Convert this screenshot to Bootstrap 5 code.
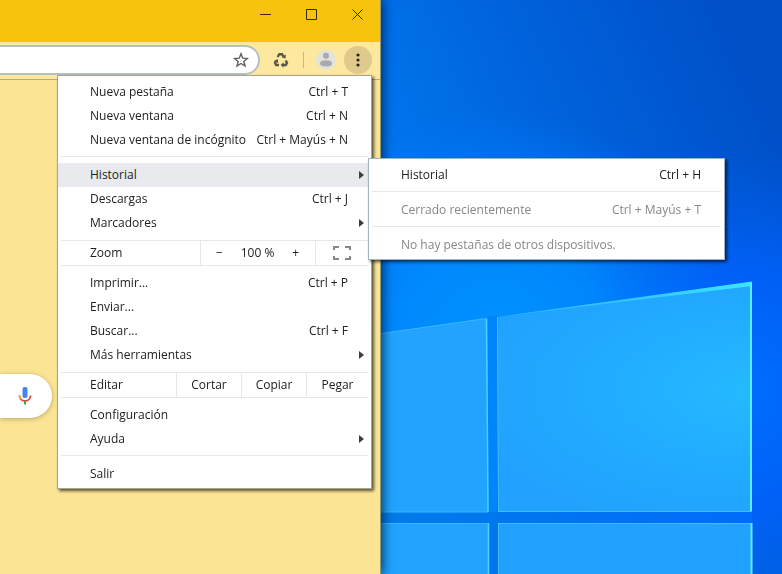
<!DOCTYPE html>
<html lang="es">
<head>
<meta charset="utf-8">
<meta name="viewport" content="width=device-width, initial-scale=1">
<title>Nueva pestaña</title>
<link href="https://cdn.jsdelivr.net/npm/bootstrap@5.3.0/dist/css/bootstrap.min.css" rel="stylesheet">
<style>
  body { font: 12px/24px "Open Sans", "Noto Sans", sans-serif; color: #202124; background: #0068e0; }
  button { font: inherit; color: inherit; background: none; border: 0; padding: 0; }
  .wallpaper { z-index: -1; }

  .browser { width: 381px; background: #fbe595; border-right: 1px solid #8c9a78; box-shadow: 2px 0 10px rgba(0, 20, 50, .75); }
  .title-bar { height: 42px; background: #f7c30d; }
  .win-btn { width: 46px; height: 28px; }
  .tool-bar { height: 38px; background: #fde8a0; border-bottom: 1px solid #cfa565; padding: 3px 8px 4px 0; }
  .omnibox { height: 30px; background: #fff; border: 2px solid #b3c1c0; border-left: 0; border-radius: 0 15px 15px 0; padding-right: 9px; }
  .omnibox input { outline: 0; min-width: 0; }
  .tool-sep { width: 1px; height: 16px; background: #d2b76d; margin: 0 8px 0 13px; }
  .round-btn { width: 28px; height: 28px; border-radius: 50%; }
  .menu-btn { background: #dfca8b; margin-left: 4px; }
  .recycle-btn { width: 18px; margin-left: 12px; }

  .search-pill { width: 52px; height: 44px; margin-top: 294px; background: #fff; border-radius: 0 22px 22px 0; box-shadow: 0 1px 5px rgba(60, 50, 10, .35); padding-right: 18px; }

  .popup { background: #fff; border: 1px solid #a9a58f; padding: 4px 0 2px; box-shadow: 2px 2px 3px rgba(0, 0, 0, .65); z-index: 10; }
  .main-menu { width: 315px; top: 33px; right: 8px; }
  .sub-menu { width: 357px; top: -5px; left: calc(100% - 3px); border-color: #9fb4c4; }
  .entry { height: 24px; padding: 0 23px 0 32px; }
  .entry:hover:enabled, .entry.open { background: #e8eaed; }
  .entry:disabled { color: #85878a; }
  .entry.parent { padding-right: 7px; }
  .entry.parent::after { content: ""; border: 4px solid transparent; border-left: 5px solid #3c4043; border-right: 0; }
  .divide { height: 1px; background: #e6e7e8; margin: 4px 3px 6px; }
  .strip { height: 26px; margin: 5px 3px 5px; border: solid #e6e7e8; border-width: 1px 0; padding-left: 29px; }
  .cell { border-left: 1px solid #e6e7e8; }
  .edit-cell { width: 65px; }
  .edit-cell:last-child { width: 62px; }
  .zoom-cell { width: 115px; padding: 0 16px 0 15px; }
  .full-cell { width: 53px; }
</style>
<script src="https://cdn.jsdelivr.net/npm/bootstrap@5.3.0/dist/js/bootstrap.bundle.min.js"></script>
</head>
<body class="min-vh-100 overflow-hidden">

<svg class="wallpaper position-fixed top-0 start-0 w-100 h-100" viewBox="0 0 782 574" preserveAspectRatio="xMinYMin slice" aria-hidden="true">
  <defs>
    <linearGradient id="sky" x1="381" y1="200" x2="740" y2="40" gradientUnits="userSpaceOnUse">
      <stop offset="0" stop-color="#0078f0"/><stop offset=".5" stop-color="#0062dc"/><stop offset="1" stop-color="#0050c8"/>
    </linearGradient>
    <radialGradient id="glow" cx="500" cy="340" r="230" gradientUnits="userSpaceOnUse">
      <stop offset="0" stop-color="#0092ff"/><stop offset=".45" stop-color="#008cff" stop-opacity=".85"/><stop offset="1" stop-color="#0078ff" stop-opacity="0"/>
    </radialGradient>
    <radialGradient id="halo" cx="740" cy="390" r="240" gradientUnits="userSpaceOnUse">
      <stop offset="0" stop-color="#006eff"/><stop offset=".5" stop-color="#0062ff" stop-opacity=".8"/><stop offset="1" stop-color="#005cf0" stop-opacity="0"/>
    </radialGradient>
    <radialGradient id="pane" cx="752" cy="390" r="300" gradientTransform="translate(0 195) scale(1 .5)" gradientUnits="userSpaceOnUse">
      <stop offset="0" stop-color="#24baff"/><stop offset=".5" stop-color="#22acff"/><stop offset="1" stop-color="#21a1ff"/>
    </radialGradient>
    <linearGradient id="rim" x1="497" y1="0" x2="752" y2="0" gradientUnits="userSpaceOnUse">
      <stop offset="0" stop-color="#38b8ff"/><stop offset=".5" stop-color="#2fc4ff"/><stop offset="1" stop-color="#3ce6ff"/>
    </linearGradient>
    <linearGradient id="gap" x1="381" y1="0" x2="752" y2="0" gradientUnits="userSpaceOnUse">
      <stop offset="0" stop-color="#007ce8"/><stop offset="1" stop-color="#006cfa"/>
    </linearGradient>
  </defs>
  <rect width="782" height="574" fill="url(#sky)"/>
  <rect width="782" height="574" fill="url(#halo)"/>
  <rect width="782" height="574" fill="url(#glow)"/>
  <path d="M300 345 752 283V574H300z" fill="url(#gap)"/>
  <path d="M487 317 497 315V512H487z" fill="#0086fc"/>
  <path d="M300 345 487 318 488.500 512H300zM300 523H489V574H300z" fill="#21a3ff"/>
  <path d="M497 317 752 282V512H498zM498 523H752V574H498z" fill="url(#pane)"/>
  <path d="M300 345 487 318.500M300 512H488M300 523.500H489" fill="none" stroke="#3cb4ff"/>
  <path d="M486.500 319 488 512M488.500 523V574" fill="none" stroke="#4cd0ff" stroke-width="1.500"/>
  <path d="M497.500 317 498.500 512M498.500 523V574M498 511.500H752M498 523.500H752" fill="none" stroke="#44b9ff"/>
  <path d="M497 317 752 281.500V286z" fill="url(#rim)"/>
  <path d="M751 283V511M751.500 523V574" fill="none" stroke="#58f0ff" stroke-width="2"/>
</svg>

<main class="browser min-vh-100 position-relative">
  <header class="title-bar d-flex justify-content-end align-items-start">
    <button class="win-btn d-flex align-items-center justify-content-center" aria-label="Minimizar"><svg width="11" height="11"><path d="M0 5.500H11" stroke="#3a2712"/></svg></button>
    <button class="win-btn d-flex align-items-center justify-content-center" aria-label="Maximizar"><svg width="11" height="11"><path d="M.5.500H10.500V10.500H.5z" fill="none" stroke="#3a2712"/></svg></button>
    <button class="win-btn d-flex align-items-center justify-content-center" aria-label="Cerrar"><svg width="11" height="11"><path d="M.5.500 10.500 10.500M10.500.500.500 10.500" stroke="#3a2712"/></svg></button>
  </header>

  <div class="tool-bar d-flex align-items-center position-relative">
    <div class="omnibox d-flex align-items-center flex-grow-1">
      <input class="flex-grow-1 border-0 bg-transparent" type="text" aria-label="Dirección">
      <button class="d-flex" aria-label="Añadir a marcadores"><svg width="16" height="16" viewBox="0 0 16 16"><path d="M8 1.800 9.700 6.200 14.400 6.500 10.800 9.500 12 14 8 11.500 4 14 5.200 9.500 1.600 6.500 6.300 6.200z" fill="none" stroke="#5a5e62" stroke-width="1.400"/></svg></button>
    </div>
    <button class="recycle-btn d-flex justify-content-center" aria-label="Reciclar">
      <svg width="16" height="16" viewBox="0 0 16 16" fill="none" stroke="#5c5846" stroke-width="2.400">
        <path d="M4.600 5 6.300 2.200H9L10.500 4.500M12.700 8.500 14 10.800 12.800 13H10M6 13H3.200L2 10.800 3 9"/>
        <path d="M8.500 5.300 12.600 6.400 12.800 2.600zM10.500 10.300V15.700L7.600 13zM.9 9 4.800 7 5.200 11z" fill="#5c5846" stroke="none"/>
      </svg>
    </button>
    <span class="tool-sep"></span>
    <button class="round-btn d-flex align-items-center justify-content-center" aria-label="Perfil">
      <svg width="20" height="20" viewBox="0 0 20 20"><circle cx="10" cy="10" r="10" fill="#e4e2dc"/><circle cx="10" cy="5.800" r="3" fill="#a7a9ad"/><path d="M4 13.500Q4 10.300 10 10.300T16 13.500 10 16.500 4 13.500z" fill="#a7a9ad"/></svg>
    </button>
    <button class="round-btn menu-btn d-flex align-items-center justify-content-center" aria-label="Menú" aria-expanded="true">
      <svg width="4" height="14" viewBox="0 0 4 14" fill="#2b2518"><circle cx="2" cy="2" r="1.600"/><circle cx="2" cy="7" r="1.600"/><circle cx="2" cy="12" r="1.600"/></svg>
    </button>

    <nav class="popup main-menu position-absolute" aria-label="Menú principal">
      <button class="entry w-100 d-flex align-items-center justify-content-between"><span>Nueva pestaña</span><span>Ctrl + T</span></button>
      <button class="entry w-100 d-flex align-items-center justify-content-between"><span>Nueva ventana</span><span>Ctrl + N</span></button>
      <button class="entry w-100 d-flex align-items-center justify-content-between"><span>Nueva ventana de incógnito</span><span>Ctrl + Mayús + N</span></button>
      <div class="divide"></div>
      <div class="position-relative">
        <button class="entry parent open w-100 d-flex align-items-center justify-content-between" aria-expanded="true">Historial</button>
        <div class="popup sub-menu position-absolute">
          <button class="entry w-100 d-flex align-items-center justify-content-between"><span>Historial</span><span>Ctrl + H</span></button>
          <div class="divide"></div>
          <button class="entry w-100 d-flex align-items-center justify-content-between" disabled><span>Cerrado recientemente</span><span>Ctrl + Mayús + T</span></button>
          <div class="divide"></div>
          <button class="entry w-100 d-flex align-items-center" disabled>No hay pestañas de otros dispositivos.</button>
        </div>
      </div>
      <button class="entry w-100 d-flex align-items-center justify-content-between"><span>Descargas</span><span>Ctrl + J</span></button>
      <button class="entry parent w-100 d-flex align-items-center justify-content-between">Marcadores</button>
      <div class="strip d-flex">
        <span class="flex-grow-1">Zoom</span>
        <div class="cell zoom-cell d-flex justify-content-between">
          <button aria-label="Reducir">−</button><span>100 %</span><button aria-label="Ampliar">+</button>
        </div>
        <button class="cell full-cell d-flex align-items-center justify-content-center" aria-label="Pantalla completa">
          <svg width="18" height="14" viewBox="0 0 18 14"><path d="M1 4V1H6M12 1H17V4M17 10V13H12M6 13H1V10" fill="none" stroke="#85878a" stroke-width="2"/></svg>
        </button>
      </div>
      <button class="entry w-100 d-flex align-items-center justify-content-between"><span>Imprimir...</span><span>Ctrl + P</span></button>
      <button class="entry w-100 d-flex align-items-center">Enviar...</button>
      <button class="entry w-100 d-flex align-items-center justify-content-between"><span>Buscar...</span><span>Ctrl + F</span></button>
      <button class="entry parent w-100 d-flex align-items-center justify-content-between">Más herramientas</button>
      <div class="strip d-flex">
        <span class="flex-grow-1">Editar</span>
        <button class="cell edit-cell">Cortar</button>
        <button class="cell edit-cell">Copiar</button>
        <button class="cell edit-cell">Pegar</button>
      </div>
      <button class="entry w-100 d-flex align-items-center">Configuración</button>
      <button class="entry parent w-100 d-flex align-items-center justify-content-between">Ayuda</button>
      <div class="divide"></div>
      <button class="entry w-100 d-flex align-items-center">Salir</button>
    </nav>
  </div>

  <div class="d-flex">
    <div class="search-pill d-flex align-items-center justify-content-end">
      <button class="d-flex" aria-label="Buscar por voz">
        <svg width="18" height="20" viewBox="0 0 18 20" fill="none">
          <rect x="6.500" y="1" width="5" height="11" rx="2" fill="#4285f4"/>
          <path d="M3.500 9.500C3.500 16.700 14.500 16.700 14.500 9.500" stroke="#e04a3a" stroke-width="1.800"/>
          <path d="M3.500 9.500Q3.500 11.500 4.700 12.900" stroke="#f5a623" stroke-width="1.800"/>
          <path d="M9 15V18.500" stroke="#34a853" stroke-width="2"/>
        </svg>
      </button>
    </div>
  </div>
</main>
</body>
</html>
